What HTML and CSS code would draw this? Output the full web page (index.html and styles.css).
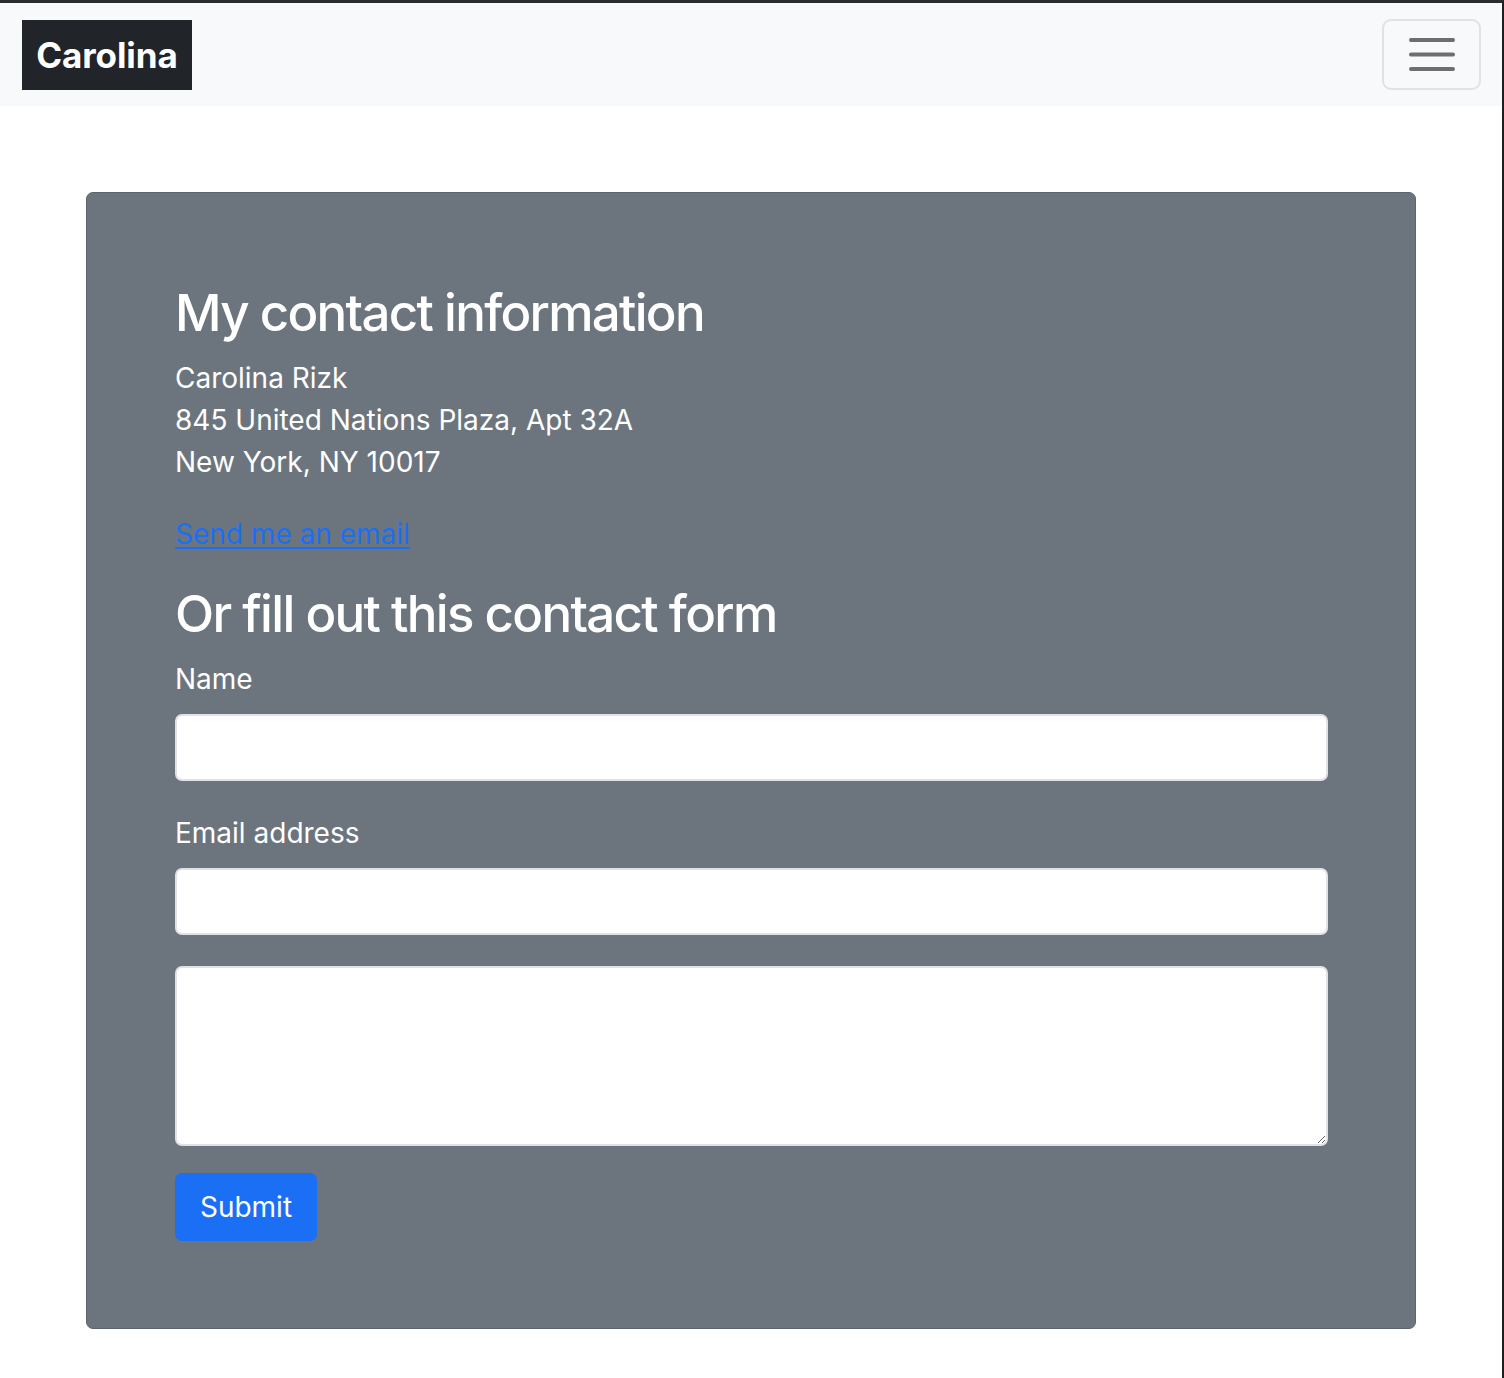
FILE: index.html
```html
<!DOCTYPE html>
<html lang="en">
<head>
<meta charset="utf-8">
<title>Carolina</title>
<link rel="stylesheet" href="styles.css">
</head>
<body>
<div class="frame">
  <nav class="navbar">
    <a class="brand" href="#">Carolina</a>
    <button class="toggler" type="button" aria-label="Toggle navigation">
      <svg width="46" height="34" viewBox="0 0 46 34" aria-hidden="true">
        <path d="M2 3H44M2 17.5H44M2 32H44" stroke="#6c6e71" stroke-width="4" stroke-linecap="round" fill="none"/>
      </svg>
    </button>
  </nav>
  <main class="main">
    <section class="card">
      <h2 class="heading">My contact information</h2>
      <address class="address">
        Carolina Rizk<br>
        845 United Nations Plaza, Apt 32A<br>
        New York, NY 10017
      </address>
      <p class="email"><a href="#">Send me an email</a></p>
      <h2 class="heading">Or fill out this contact form</h2>
      <form class="form">
        <div class="field">
          <label class="label" for="name">Name</label>
          <input class="control" id="name" type="text">
        </div>
        <div class="field">
          <label class="label" for="email">Email address</label>
          <input class="control" id="email" type="email">
        </div>
        <div class="field field-last">
          <textarea class="control area" id="message"></textarea>
        </div>
        <button class="submit" type="button">Submit</button>
      </form>
    </section>
  </main>
</div>
</body>
</html>
```
FILE: styles.css
```css
* { box-sizing: border-box; }
html, body { margin: 0; padding: 0; background: #fff; }
body {
  font-family: Inter, "Noto Sans", "Liberation Sans", sans-serif;
  font-size: 28px;
  line-height: 42px;
  color: #212529;
}
.frame {
  min-height: 1378px;
  border-top: 3px solid #2b2c2e;
  border-right: 2px solid #1f1f21;
}
.navbar {
  height: 103px;
  background: #f8f9fa;
  display: flex;
  align-items: center;
  justify-content: space-between;
  padding: 0 21px 0 22px;
}
.brand {
  display: flex;
  align-items: center;
  justify-content: center;
  width: 170px;
  height: 70px;
  margin-top: 1px;
  background: #212529;
  color: #fff;
  font-weight: 700;
  font-size: 35px;
  letter-spacing: -0.1px;
  text-decoration: none;
}
.toggler {
  width: 99px;
  height: 71px;
  margin-top: -1px;
  background: transparent;
  border: 2px solid #e1e2e4;
  border-radius: 9px;
  display: flex;
  align-items: center;
  justify-content: center;
  padding: 0;
}
.main {
  padding: 86px 86px 0 86px;
}
.card {
  background: #6c757d;
  border: 1px solid #5d646b;
  border-radius: 7px;
  padding: 89px 87px 87px 88px;
  color: #fff;
}
.heading {
  margin: 0 0 14px 0;
  font-size: 51px;
  line-height: 61px;
  font-weight: 500;
  letter-spacing: -1.7px;
}
.address {
  font-style: normal;
  margin: 0 0 30px 0;
}
.email { margin: 0 0 28px 0; }
.email a { color: #1a6ff5; text-decoration: underline; text-underline-offset: 3px; }
.form { margin: 0; }
.field { margin-bottom: 31px; display: flex; flex-direction: column; }
.field-last { margin-bottom: 30px; }
.label { margin-bottom: 14px; }
.control {
  display: block;
  width: 100%;
  height: 67px;
  border: 2px solid #dfe2e6;
  border-radius: 7px;
  background: #fff;
  font: inherit;
  padding: 10px 21px;
}
.area {
  height: 180px;
  resize: vertical;
}
.submit {
  display: block;
  width: 142px;
  height: 68px;
  background: #1a6ff5;
  border: 0;
  border-radius: 7px;
  color: #fff;
  font: inherit;
  padding: 0;
  margin-top: -3px;
}
```
